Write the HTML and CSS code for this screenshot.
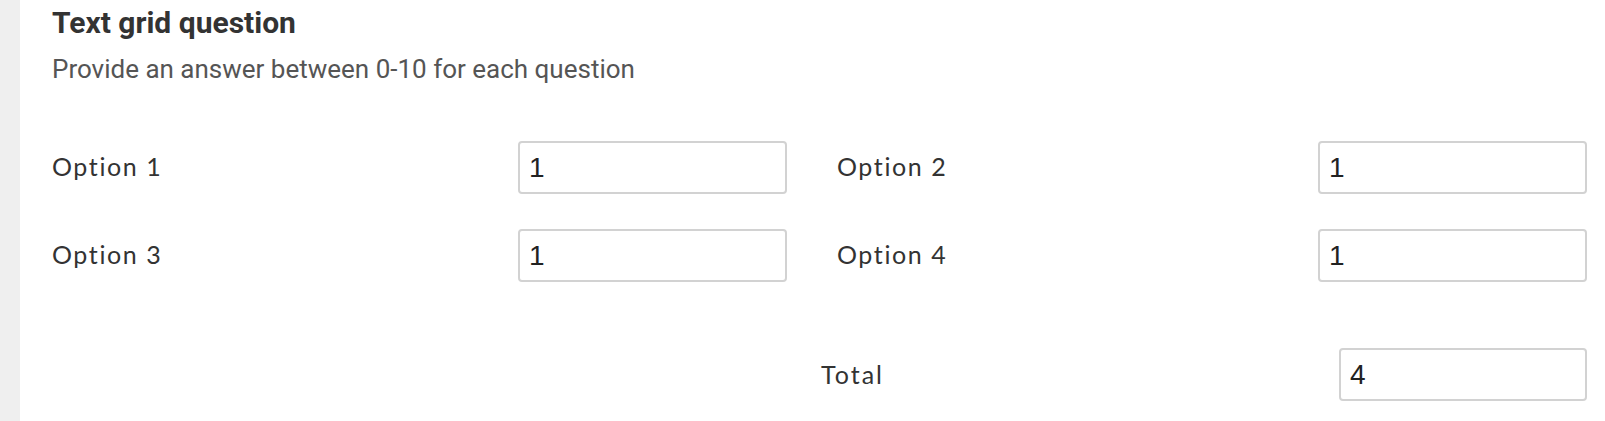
FILE: index.html
```html
<!DOCTYPE html>
<html lang="en">
<head>
    <meta charset="UTF-8">
    <meta name="viewport" content="width=device-width, initial-scale=1.0">
    <title>Text grid question</title>
    <link rel="stylesheet" href="styles.css">
</head>
<body>

    <div class="question">
        <h2>Text grid question</h2>
        <p class="help">Provide an answer between 0-10 for each question</p>

        <div class="grid">
            <div class="cell">
                <label for="opt1">Option 1</label>
                <input type="text" id="opt1" value="1">
            </div>
            <div class="cell">
                <label for="opt2">Option 2</label>
                <input type="text" id="opt2" value="1">
            </div>
            <div class="cell">
                <label for="opt3">Option 3</label>
                <input type="text" id="opt3" value="1">
            </div>
            <div class="cell">
                <label for="opt4">Option 4</label>
                <input type="text" id="opt4" value="1">
            </div>
        </div>

        <div class="total">
            <label for="total">Total</label>
            <input type="text" id="total" class="total-input" value="4" readonly>
        </div>
    </div>

</body>
</html>
```

FILE: styles.css
```css
html, body {
    margin: 0;
    height: 100%;
}
body {
    background: #efefef;
    overflow: hidden;
}
.question {
    margin-left: 20px;
    min-height: 100%;
    box-sizing: border-box;
    padding: 6px 18px 0 32px;
    background: white;
}
h2 {
    margin: 0;
    font-family: Roboto, "Liberation Sans", sans-serif;
    font-weight: bold;
    font-size: 30px;
    line-height: 34px;
    color: #333;
}
.help {
    margin: 14px 0 0;
    font-family: Roboto, "Liberation Sans", sans-serif;
    font-size: 26px;
    line-height: 30px;
    color: #555;
}
.grid {
    display: grid;
    grid-template-columns: 735px 1fr;
    column-gap: 50px;
    row-gap: 35px;
    margin-top: 57px;
}
.cell {
    display: flex;
    align-items: center;
    justify-content: space-between;
}
label {
    padding-bottom: 4px;
    font-family: Lato, "Noto Sans", sans-serif;
    font-size: 25px;
    letter-spacing: 1.6px;
    color: #333;
}
.total label {
    padding-bottom: 2px;
    letter-spacing: 2px;
}
input {
    width: 269px;
    height: 53px;
    box-sizing: border-box;
    padding: 0 9px;
    font-family: "Liberation Sans", Arial, sans-serif;
    font-size: 28px;
    color: #222;
    border: 2px solid #d2d2d2;
    border-radius: 4px;
    background: white;
    outline: none;
}
.total {
    display: flex;
    align-items: center;
    justify-content: space-between;
    width: 766px;
    margin: 66px 0 0 auto;
}
.total-input {
    width: 248px;
}
```
